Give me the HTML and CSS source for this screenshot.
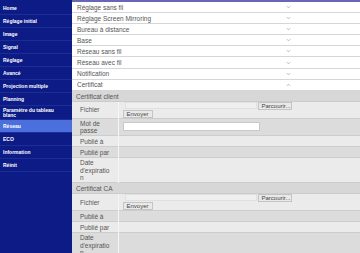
FILE: index.html
```html
<!DOCTYPE html>
<html lang="fr">

<head>
    <meta charset="UTF-8">
    <title>Réseau</title>
    <link rel="stylesheet" href="styles.css">
</head>

<body>
    <div class="page">
        <!-- Menu -->
        <nav class="sidebar">
            <a class="nav-item">Home</a>
            <a class="nav-item">Réglage initial</a>
            <a class="nav-item">Image</a>
            <a class="nav-item">Signal</a>
            <a class="nav-item">Réglage</a>
            <a class="nav-item">Avancé</a>
            <a class="nav-item">Projection multiple</a>
            <a class="nav-item">Planning</a>
            <a class="nav-item two-lines">Paramètre du tableau blanc</a>
            <a class="nav-item active">Réseau</a>
            <a class="nav-item">ECO</a>
            <a class="nav-item">Information</a>
            <a class="nav-item">Réinit</a>
        </nav>

        <main class="content">
            <div class="topbar"></div>

            <div class="acc-row"><span class="acc-title">Réglage sans fil</span><svg class="chev" viewBox="0 0 6 4"><path d="M1 1 L3 3 L5 1" /></svg></div>
            <div class="acc-row"><span class="acc-title">Réglage Screen Mirroring</span><svg class="chev" viewBox="0 0 6 4"><path d="M1 1 L3 3 L5 1" /></svg></div>
            <div class="acc-row"><span class="acc-title">Bureau à distance</span><svg class="chev" viewBox="0 0 6 4"><path d="M1 1 L3 3 L5 1" /></svg></div>
            <div class="acc-row"><span class="acc-title">Base</span><svg class="chev" viewBox="0 0 6 4"><path d="M1 1 L3 3 L5 1" /></svg></div>
            <div class="acc-row"><span class="acc-title">Réseau sans fil</span><svg class="chev" viewBox="0 0 6 4"><path d="M1 1 L3 3 L5 1" /></svg></div>
            <div class="acc-row"><span class="acc-title">Réseau avec fil</span><svg class="chev" viewBox="0 0 6 4"><path d="M1 1 L3 3 L5 1" /></svg></div>
            <div class="acc-row"><span class="acc-title">Notification</span><svg class="chev" viewBox="0 0 6 4"><path d="M1 1 L3 3 L5 1" /></svg></div>
            <div class="acc-row open"><span class="acc-title">Certificat</span><svg class="chev" viewBox="0 0 6 4"><path d="M1 3 L3 1 L5 3" /></svg></div>

            <!-- Certificat client -->
            <div class="section-head">Certificat client</div>
            <table class="cert-table">
                <tr class="light file-row">
                    <th>Fichier</th>
                    <td>
                        <div class="file-line"><span class="file-box"></span><button class="btn">Parcourir...</button></div>
                        <button class="btn">Envoyer</button>
                    </td>
                </tr>
                <tr class="dark pass-row">
                    <th>Mot de passe</th>
                    <td><input class="text-input" type="password"></td>
                </tr>
                <tr class="light single">
                    <th>Publié à</th>
                    <td></td>
                </tr>
                <tr class="dark single">
                    <th>Publié par</th>
                    <td></td>
                </tr>
                <tr class="light">
                    <th>Date d'expiration</th>
                    <td></td>
                </tr>
            </table>

            <!-- Certificat CA -->
            <div class="section-head">Certificat CA</div>
            <table class="cert-table">
                <tr class="light file-row">
                    <th>Fichier</th>
                    <td>
                        <div class="file-line"><span class="file-box"></span><button class="btn">Parcourir...</button></div>
                        <button class="btn">Envoyer</button>
                    </td>
                </tr>
                <tr class="dark single">
                    <th>Publié à</th>
                    <td></td>
                </tr>
                <tr class="light single">
                    <th>Publié par</th>
                    <td></td>
                </tr>
                <tr class="dark">
                    <th>Date d'expiration</th>
                    <td></td>
                </tr>
            </table>
        </main>
    </div>
</body>

</html>
```

FILE: styles.css
```css
/* General Reset */
* {
    margin: 0;
    padding: 0;
    box-sizing: border-box;
}

body {
    font-family: 'Liberation Sans', Arial, sans-serif;
    background-color: #ffffff;
    color: #555;
    overflow: hidden;
}

.page {
    display: flex;
    min-height: 253px;
}

/* Sidebar */
.sidebar {
    width: 72px;
    flex-shrink: 0;
    background: #0c1b86;
    padding-top: 2px;
    display: flex;
    flex-direction: column;
}

.nav-item {
    display: flex;
    align-items: center;
    height: 13px;
    padding: 0 12px 0 3px;
    border-bottom: 1px solid #1d2d96;
    color: #ffffff;
    font-size: 5px;
    font-weight: bold;
    line-height: 5px;
}

.nav-item.two-lines {
    height: 14px;
}

.nav-item.active {
    background: #4b6fdc;
}

/* Content */
.content {
    flex: 1;
    min-width: 0;
    background: #fff;
}

.topbar {
    height: 2px;
    background: #6767b6;
}

.acc-row {
    display: flex;
    align-items: center;
    height: 11.1px;
    padding-left: 5px;
    border-bottom: 1px solid #d6d6d6;
    font-size: 6.5px;
    color: #555;
}

.acc-title {
    width: 209px;
}

.chev {
    width: 5px;
    height: 4px;
}

.chev path {
    fill: none;
    stroke: #a6a6cc;
    stroke-width: 1;
}

.section-head {
    height: 11px;
    line-height: 11px;
    padding-left: 4px;
    background: #d7d7d7;
    border-bottom: 1px solid #cbcbcb;
    font-size: 6.5px;
    color: #555;
}

.cert-table {
    width: 100%;
    border-collapse: collapse;
    table-layout: fixed;
    font-size: 6.5px;
}

.cert-table th {
    width: 46px;
    padding: 1px 6px 0 8px;
    font-weight: normal;
    text-align: left;
    line-height: 7.6px;
    overflow-wrap: anywhere;
    border-right: 1px solid #f5f5f5;
    color: #555;
}

.cert-table td {
    padding: 0 0 0 4px;
}

.cert-table tr {
    height: 25px;
    border-bottom: 1px solid #cdcdcd;
}

.cert-table tr.single {
    height: 11px;
}

.cert-table tr.file-row {
    height: 16px;
}

.cert-table tr.pass-row {
    height: 15px;
}

.light {
    background: #ebebeb;
}

.dark {
    background: #dcdcdc;
}

.file-line {
    display: flex;
    align-items: center;
}

.file-box {
    width: 132px;
    height: 7px;
    margin-left: 2px;
    background: #efefef;
    border: 1px solid #e0e0e0;
}

.btn {
    height: 8px;
    padding: 0 3px;
    font-family: inherit;
    font-size: 6px;
    line-height: 6px;
    color: #444;
    background: #e9e9e9;
    border: 1px solid #c4c4c4;
}

.file-line .btn {
    margin-left: 1px;
    width: 34px;
    text-align: left;
}

.text-input {
    display: block;
    width: 137px;
    height: 9px;
    background: #fff;
    border: 1px solid #c9c9c9;
}
```
